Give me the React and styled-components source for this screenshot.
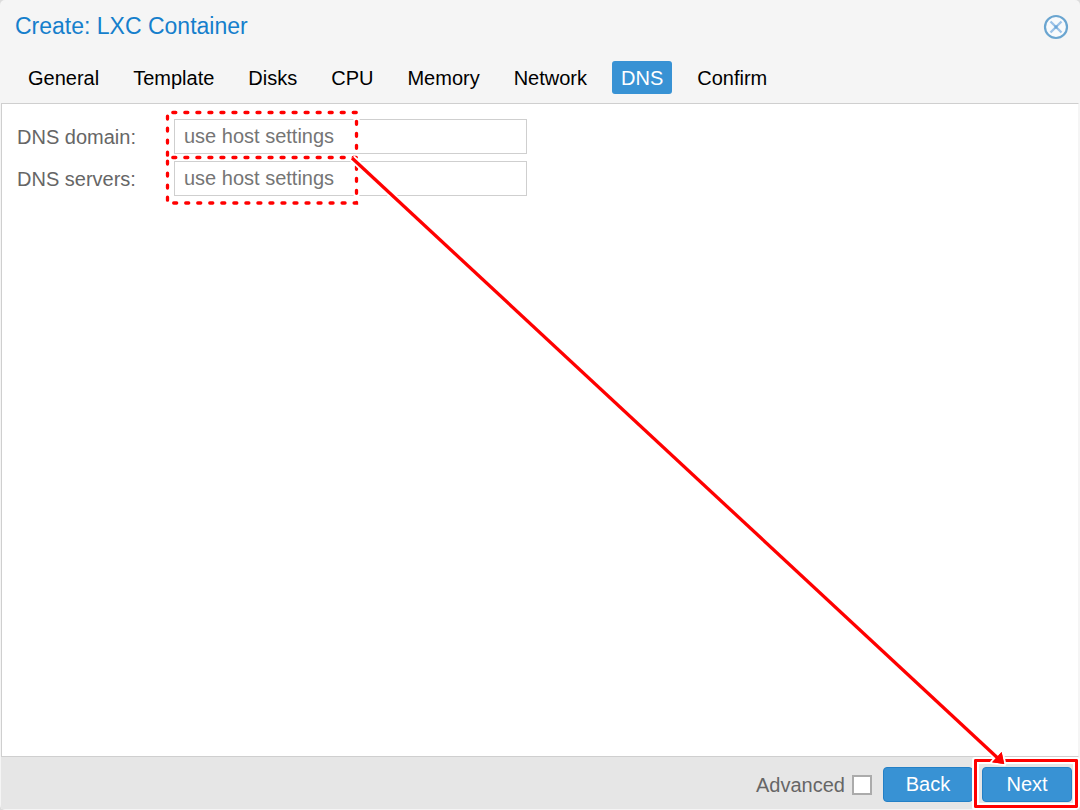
import React, {useState} from 'react';
import styled, {createGlobalStyle} from 'styled-components';

const GlobalStyle = createGlobalStyle`
  * {
    box-sizing: border-box;
  }
  body {
    margin: 0;
    background-color: #dcdcdc;
    font-family: 'Liberation Sans', Arial, sans-serif;
    font-size: 20px;
    line-height: 24px;
  }
`;

const Window = styled.div`
  position: relative;
  display: flex;
  flex-direction: column;
  min-height: 100vh;
  padding: 0 1px 1px;
  border-radius: 5px;
  overflow: hidden;
  background-color: #f5f5f5;
`;

const Header = styled.header`
  display: flex;
  align-items: center;
  justify-content: space-between;
  height: 53px;
  padding: 0 10px 0 14px;
`;

const Title = styled.h1`
  margin: 0;
  padding-bottom: 2px;
  color: #157fcc;
  font-size: 23px;
  font-weight: 400;
`;

const CloseButton = styled.button`
  display: flex;
  padding: 0;
  border: none;
  background: none;
  cursor: pointer;
`;

const Tabs = styled.nav`
  display: flex;
  gap: 16px;
  padding: 8px 18px 9px;
`;

const Tab = styled.button`
  height: 33px;
  padding: 0 9px;
  border: none;
  border-radius: 3px;
  color: ${e => (e.$active ? '#fff' : '#000')};
  background-color: ${e => (e.$active ? '#3892d4' : 'transparent')};
  font: inherit;
  cursor: pointer;
`;

const Panel = styled.main`
  flex: 1;
  display: flex;
  flex-direction: column;
  gap: 7px;
  padding: 15px;
  border: 1px solid #cfcfcf;
  border-right-color: #f5f5f5;
  background-color: #fff;
`;

const Row = styled.div`
  display: grid;
  grid-template-columns: 157px minmax(0, 353px);
  align-items: center;
`;

const Label = styled.label`
  color: #666;
`;

const Field = styled.div`
  position: relative;
`;

const Input = styled.input`
  display: block;
  width: 100%;
  height: 35px;
  padding: 0 9px;
  border: 1px solid #cfcfcf;
  border-radius: 0;
  background-color: #fff;
  color: #000;
  font: inherit;
  &::placeholder {
    color: #757575;
  }
`;

const Footer = styled.footer`
  display: flex;
  align-items: center;
  justify-content: flex-end;
  gap: 9px;
  padding: 10px 7px 7px;
  background-color: #e6e6e6;
`;

const Advanced = styled.label`
  display: flex;
  align-items: center;
  gap: 7px;
  margin-right: 2px;
  color: #666;
`;

const Checkbox = styled.input`
  appearance: none;
  width: 20px;
  height: 20px;
  margin: 0;
  border: 2px solid #ababab;
  background-color: #fff;
  &:checked {
    background-color: #3892d4;
  }
`;

const Button = styled.button`
  width: 90px;
  height: 35px;
  padding: 0 0 2px;
  border: 1px solid #2480c6;
  border-radius: 4px;
  background-color: #3892d4;
  color: #fff;
  font: inherit;
  cursor: pointer;
`;

const Highlighted = styled.div`
  position: relative;
  display: flex;
`;

// red frame with a white edge on both sides
const SolidFrame = styled.div`
  position: absolute;
  inset: -8px -6px -6px -8px;
  border: 3px solid #f00;
  border-radius: 1px;
  outline: 2px solid #fff;
  box-shadow: inset 0 0 0 2px #fff;
  pointer-events: none;
`;

const DashedSvg = styled.svg`
  position: absolute;
  left: -7px;
  top: ${e => e.$top}px;
  overflow: visible;
  pointer-events: none;
`;

// stretches from the fields down to the Next button
const ArrowSvg = styled.svg`
  position: absolute;
  left: 352px;
  top: 158px;
  width: calc(100% - 430px);
  height: calc(100% - 206px);
  overflow: visible;
  pointer-events: none;
`;

const DashedFrame = ({top}) => {
  const dash = {
    d: 'M0.5 0.5H189.5V46H0.5Z',
    fill: 'none',
    strokeLinecap: 'round',
    strokeDasharray: '3 9.03',
    strokeDashoffset: -5.3,
  };
  return (
    <DashedSvg $top={top} width="190" height="46" aria-hidden="true">
      <path {...dash} stroke="#fff" strokeWidth="7" />
      <path {...dash} stroke="#f00" strokeWidth="3.3" />
    </DashedSvg>
  );
};

const Arrow = () => (
  <ArrowSvg aria-hidden="true">
    <defs>
      <marker id="head" markerUnits="userSpaceOnUse" markerWidth="24" markerHeight="24" refX="12" refY="12" orient="auto">
        <path d="M5 5L15 12L5 19Z" fill="#f00" stroke="#fff" strokeWidth="4" strokeLinejoin="round" paintOrder="stroke" />
      </marker>
      <marker id="headTop" markerUnits="userSpaceOnUse" markerWidth="24" markerHeight="24" refX="12" refY="12" orient="auto">
        <path d="M5 5L15 12L5 19Z" fill="#f00" />
      </marker>
    </defs>
    <line x1="0" y1="0" x2="100%" y2="100%" stroke="#fff" strokeWidth="7" markerEnd="url(#head)" />
    <line x1="0" y1="0" x2="100%" y2="100%" stroke="#f00" strokeWidth="3.3" markerEnd="url(#headTop)" />
  </ArrowSvg>
);

const CloseIcon = () => (
  <svg width="26" height="26" viewBox="0 0 26 26" fill="none" aria-hidden="true">
    <circle cx="13" cy="13" r="11" fill="#f8fafc" stroke="#6aa5d0" strokeWidth="2.2" />
    <path d="M7.5 7.5L18.5 18.5M18.5 7.5L7.5 18.5" stroke="#9cc2e8" strokeWidth="2.4" />
    <path d="M11.5 11.5L14.5 14.5M14.5 11.5L11.5 14.5" stroke="#6ba6d8" strokeWidth="1.5" />
  </svg>
);

const tabs = ['General', 'Template', 'Disks', 'CPU', 'Memory', 'Network', 'DNS', 'Confirm'];

const App = () => {
  const [active, setActive] = useState('DNS');

  return (
    <>
      <GlobalStyle />
      <Window>
        <Header>
          <Title>Create: LXC Container</Title>
          <CloseButton type="button" aria-label="Close">
            <CloseIcon />
          </CloseButton>
        </Header>
        <Tabs>
          {tabs.map(tab => (
            <Tab key={tab} type="button" $active={tab === active} onClick={() => setActive(tab)}>
              {tab}
            </Tab>
          ))}
        </Tabs>
        <Panel>
          <Row>
            <Label htmlFor="domain">DNS domain:</Label>
            <Field>
              <Input id="domain" type="text" placeholder="use host settings" />
              <DashedFrame top={-7} />
            </Field>
          </Row>
          <Row>
            <Label htmlFor="servers">DNS servers:</Label>
            <Field>
              <Input id="servers" type="text" placeholder="use host settings" />
              <DashedFrame top={-4} />
            </Field>
          </Row>
        </Panel>
        <Footer>
          <Advanced>
            Advanced
            <Checkbox type="checkbox" />
          </Advanced>
          <Button type="button">Back</Button>
          <Highlighted>
            <Button type="button">Next</Button>
            <SolidFrame />
          </Highlighted>
        </Footer>
        <Arrow />
      </Window>
    </>
  );
};

export default App;
